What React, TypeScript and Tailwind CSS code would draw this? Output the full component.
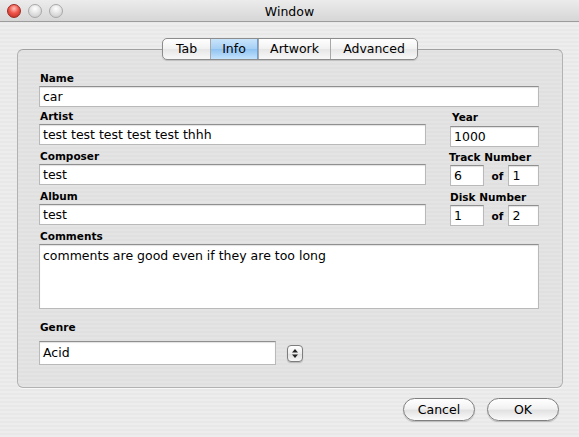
import React from "react"

const font = "font-['DejaVu_Sans',sans-serif]"

function Field({ value, className = "" }: { value: string; className?: string }) {
  return (
    <div
      className={
        "h-[21px] bg-white border border-[#b9b9b9] border-t-[#8f8f8f] shadow-[inset_0_1px_1px_rgba(0,0,0,0.12)] pl-[3px] text-[12.5px] leading-[20px] text-black whitespace-nowrap overflow-hidden " +
        className
      }
    >
      {value}
    </div>
  )
}

function Label({ children, className = "" }: { children: React.ReactNode; className?: string }) {
  return <div className={"h-[16px] text-[10.5px] leading-[16px] font-bold text-black " + className}>{children}</div>
}

function Light({ red }: { red?: boolean }) {
  return (
    <div
      className={
        "w-[14px] h-[14px] rounded-full border " +
        (red
          ? "border-[#9a2a22] bg-[radial-gradient(circle_at_50%_30%,#ffc2bb_0%,#f0564b_45%,#b8261d_100%)]"
          : "border-[#a8a8a8] bg-[radial-gradient(circle_at_50%_30%,#ffffff_0%,#e2e2e2_50%,#c4c4c4_100%)]")
      }
    />
  )
}

const tabs = [
  { label: "Tab", w: "w-[47px]" },
  { label: "Info", w: "w-[48px]" },
  { label: "Artwork", w: "w-[72px]" },
  { label: "Advanced", w: "w-[87px]" },
]

export default function App() {
  return (
    <div
      className={
        "w-[579px] h-[437px] flex flex-col overflow-hidden text-black " + font
      }
    >
      {/* title bar */}
      <div className="h-[22px] shrink-0 relative flex items-center border-b border-[#9c9c9c] bg-[linear-gradient(#ececec,#d6d6d6)]">
        <div className="flex items-center gap-[7px] pl-[7px]">
          <Light red />
          <Light />
          <Light />
        </div>
        <div className="absolute inset-0 flex items-center justify-center text-[12.5px] pt-[3px]">Window</div>
      </div>

      {/* body */}
      <div className="flex-1 flex flex-col bg-[repeating-linear-gradient(0deg,#ededed_0px,#ededed_2px,#e8e8e8_2px,#e8e8e8_4px)]">
        <div className="relative mt-[27px] ml-[17px] w-[546px] h-[339px] rounded-[6px] border border-[#b2b2b2] border-t-[#a0a0a0] shadow-[0_1px_0_rgba(255,255,255,0.6)] bg-[repeating-linear-gradient(0deg,#e4e4e4_0px,#e4e4e4_2px,#e0e0e0_2px,#e0e0e0_4px)]">
          {/* segmented tabs */}
          <div className="absolute -top-[12px] left-1/2 -translate-x-1/2 flex h-[22px] rounded-[5px] border border-[#8c8c8c] overflow-hidden shadow-[0_1px_1px_rgba(0,0,0,0.15)] bg-[linear-gradient(#ffffff,#f1f1f1_50%,#e6e6e6_51%,#f8f8f8)]">
            {tabs.map((t, i) => (
              <div
                key={t.label}
                className={
                  t.w +
                  " flex items-center justify-center text-[12.5px] pt-[1px] " +
                  (i > 0 ? "border-l border-[#a8a8a8] " : "") +
                  (t.label === "Info"
                    ? "bg-[linear-gradient(#c9e4fb,#a5cff4_50%,#8fc2f0_51%,#c4e3fd)] border-r border-r-[#6f9ccc]"
                    : "")
                }
              >
                {t.label}
              </div>
            ))}
          </div>

          <div className="flex flex-col pl-[21px] pt-[20px] w-[521px]">
            <Label className="ml-[1px]">Name</Label>
            <Field value="car" className="w-[500px]" />

            <div className="flex gap-[24px] mt-[1px]">
              <div className="flex flex-col w-[387px]">
                <Label className="ml-[1px]">Artist</Label>
                <Field value="test test test test test thhh" />
                <Label className="ml-[1px] mt-[3px]">Composer</Label>
                <Field value="test" />
                <Label className="ml-[1px] mt-[3px]">Album</Label>
                <Field value="test" />
              </div>
              <div className="flex flex-col w-[89px] pt-[1px]">
                <Label className="ml-[2px]">Year</Label>
                <Field value="1000" className="mt-[1px]" />
                <Label className="mt-[2px] -ml-[1px]">Track Number</Label>
                <div className="flex items-center">
                  <Field value="6" className="w-[34px]" />
                  <span className="text-[10.5px] font-bold ml-[8px] mr-[5px] pt-[3px]">of</span>
                  <Field value="1" className="w-[31px] ml-auto" />
                </div>
                <Label className="mt-[3px]">Disk Number</Label>
                <div className="flex items-center">
                  <Field value="1" className="w-[34px]" />
                  <span className="text-[10.5px] font-bold ml-[8px] mr-[5px] pt-[3px]">of</span>
                  <Field value="2" className="w-[31px] ml-auto" />
                </div>
              </div>
            </div>

            <Label className="ml-[1px] mt-[2px]">Comments</Label>
            <div className="w-[500px] h-[65px] bg-white border border-[#b9b9b9] border-t-[#8f8f8f] shadow-[inset_0_1px_1px_rgba(0,0,0,0.12)] pl-[3px] pt-[2px] text-[12.5px] leading-[17px]">
              comments are good even if they are too long
            </div>

            <Label className="ml-[1px] mt-[10px]">Genre</Label>
            <div className="flex items-center gap-[11px] mt-[6px]">
              <Field value="Acid" className="w-[237px] h-[24px] leading-[22px]" />
              <div className="w-[16px] h-[17px] rounded-[4px] border border-[#7d7d7d] bg-[linear-gradient(#ffffff,#ececec_50%,#dedede_51%,#f7f7f7)] shadow-[0_1px_1px_rgba(0,0,0,0.2)] flex items-center justify-center">
                <svg width="8" height="11" viewBox="0 0 8 11">
                  <path d="M4 1 L7 4.5 L1 4.5 Z" fill="#222" />
                  <path d="M4 10 L7 6.5 L1 6.5 Z" fill="#222" />
                </svg>
              </div>
            </div>
          </div>
        </div>

        {/* buttons */}
        <div className="flex justify-end gap-[12px] pr-[20px] mt-[10px]">
          {["Cancel", "OK"].map((b) => (
            <div
              key={b}
              className="w-[72px] h-[23px] rounded-full border border-[#7f7f7f] bg-[linear-gradient(#ffffff,#f2f2f2_45%,#e2e2e2_55%,#fbfbfb)] shadow-[0_1px_1px_rgba(0,0,0,0.2)] flex items-center justify-center text-[12.5px] pt-[1px]"
            >
              {b}
            </div>
          ))}
        </div>
      </div>
    </div>
  )
}
